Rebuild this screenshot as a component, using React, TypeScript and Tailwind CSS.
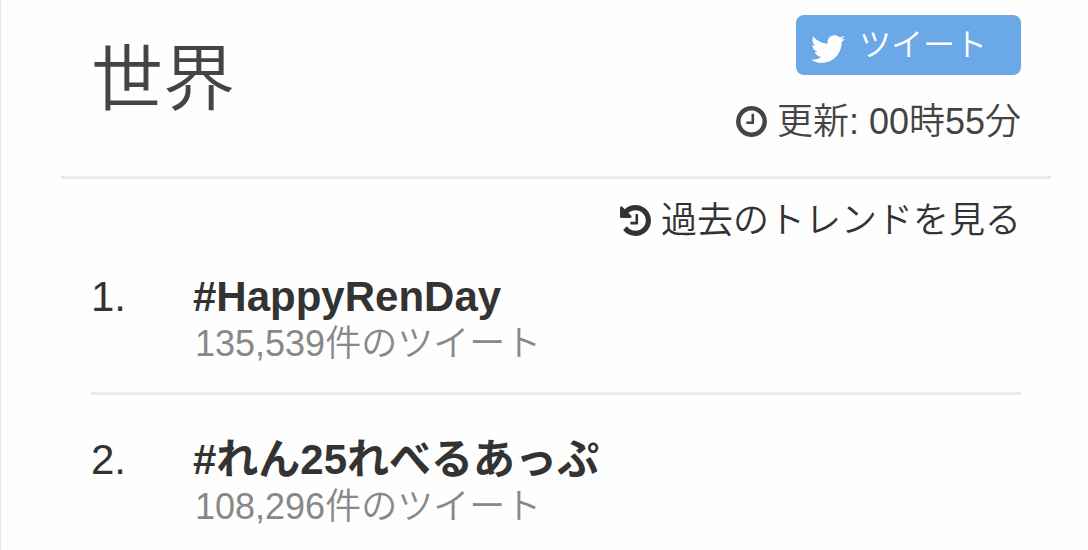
import { FaTwitter } from 'react-icons/fa';

const trends = [
    { rank: 1, name: '#HappyRenDay', count: '135,539' },
    { rank: 2, name: '#れん25れべるあっぷ', count: '108,296' },
];

function ClockIcon() {
    return (
        <svg viewBox="128 128 1536 1536" className="size-[31px] shrink-0" fill="currentColor" aria-hidden="true">
            <path d="M1024 544v448q0 14-9 23t-23 9h-320q-14 0-23-9t-9-23v-64q0-14 9-23t23-9h224v-352q0-14 9-23t23-9h64q14 0 23 9t9 23zm416 352q0-148-73-273t-198-198-273-73-273 73-198 198-73 273 73 273 198 198 273 73 273-73 198-198 73-273zm224 0q0 209-103 385.5t-279.5 279.5-385.5 103-385.5-103-279.5-279.5-103-385.5 103-385.5 279.5-279.5 385.5-103 385.5 103 279.5 279.5 103 385.5z" />
        </svg>
    );
}

function HistoryIcon() {
    return (
        <svg viewBox="128 128 1536 1536" className="size-[31px] shrink-0" fill="currentColor" aria-hidden="true">
            <path d="M1664 896q0 156-61 298t-164 245-245 164-298 61q-172 0-327-72.5t-264-204.5q-7-10-6.5-22.5t8.5-20.5l137-138q10-9 25-9 16 2 23 12 73 95 179 147t225 52q104 0 198.5-40.5t163.5-109.5 109.5-163.5 40.5-198.5-40.5-198.5-109.5-163.5-163.5-109.5-198.5-40.5q-98 0-188 35.5t-160 101.5l137 138q31 30 14 69-17 40-59 40h-448q-26 0-45-19t-19-45v-448q0-42 40-59 39-17 69 14l130 129q107-101 244.5-156.5t284.5-55.5q156 0 298 61t245 164 164 245 61 298zm-640-288v448q0 14-9 23t-23 9h-320q-14 0-23-9t-9-23v-64q0-14 9-23t23-9h224v-352q0-14 9-23t23-9h64q14 0 23 9t9 23z" />
        </svg>
    );
}

export default function App() {
    return (
        <main
            lang="ja"
            className="min-h-screen border-l border-[#e5e5e5] bg-[#fefefe] pr-[37px] pl-15 font-['Liberation_Sans','Noto_Sans_CJK_JP',sans-serif] font-[350] text-[#333]"
        >
            <header className="flex items-start justify-between border-b-3 border-[#ebebeb] px-[30px] pt-[15px] pb-8 text-[#444]">
                <h1 className="pt-[18px] text-[72px] leading-[92px]">世界</h1>
                <div className="flex flex-col items-end gap-6">
                    <button
                        type="button"
                        className="flex h-15 w-[225px] items-center gap-[14px] rounded-lg bg-[#6aa8e8] pl-[15px] text-[32px] leading-none text-white"
                    >
                        <FaTwitter className="mt-2 size-[34px]" />
                        ツイート
                    </button>
                    <p className="flex items-center gap-[10px] text-4xl leading-[45px]">
                        <ClockIcon />
                        更新: 00時55分
                    </p>
                </div>
            </header>

            <div className="px-[30px]">
                <div className="flex justify-end pt-[19px]">
                    <a href="#history" className="flex items-center gap-[10px] text-4xl leading-[45px]">
                        <HistoryIcon />
                        過去のトレンドを見る
                    </a>
                </div>

                <ol>
                    {trends.map((trend) => (
                        <li
                            key={trend.rank}
                            className="flex border-b-3 border-[#ebebeb] pt-[42px] pb-6 first:pt-[31px] last:border-b-0 last:pb-0"
                        >
                            <span className="w-[102px] shrink-0 text-[42px] leading-[46px]">{trend.rank}.</span>
                            <div>
                                <a href="#trend" className="block text-[42px] leading-[46px] font-bold">
                                    {trend.name}
                                </a>
                                <p className="pl-0.5 text-4xl leading-[48px] text-[#888]">{trend.count}件のツイート</p>
                            </div>
                        </li>
                    ))}
                </ol>
            </div>
        </main>
    );
}
